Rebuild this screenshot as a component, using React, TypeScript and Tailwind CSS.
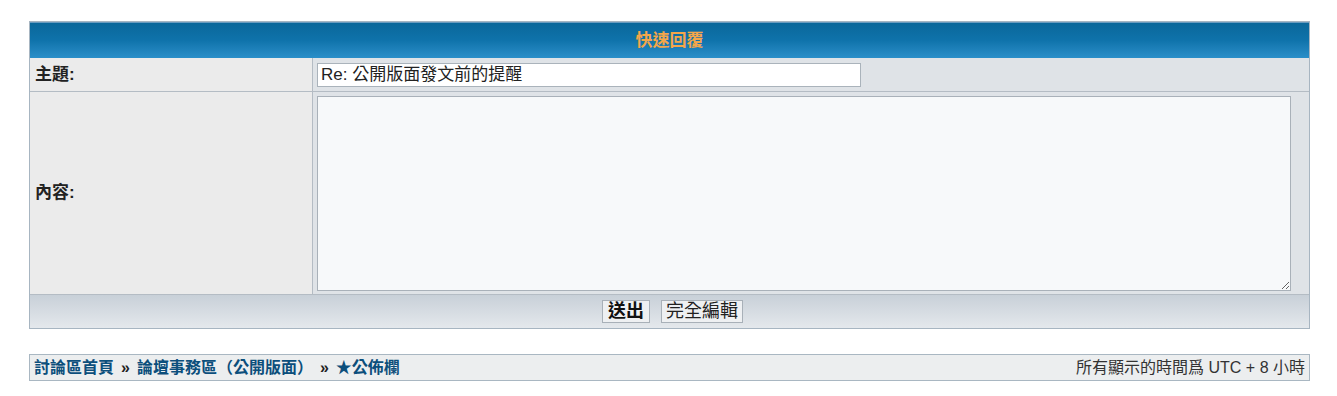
const cjk = { fontFamily: '"Liberation Sans", "Noto Sans CJK TC", sans-serif' };

const QuickReply = () => {
  return (
    <div className="border border-[#a7b5c1] bg-[#eceef0]">
      {/* 標題列 */}
      <div className="h-[36px] flex items-center justify-center border-t border-[#6a9cc0] bg-gradient-to-b from-[#0a679a] via-[#0f73ab] to-[#2a8fc9]">
        <span className="text-[17px] font-bold text-[#f4a64a]">快速回覆</span>
      </div>

      {/* 主題 */}
      <div className="flex h-[34px] border-b border-[#b4bcc4]">
        <div className="w-[283px] flex items-center pl-[5px] bg-[#ebebeb] border-r border-[#b4bcc4]">
          <span className="text-[17px] font-bold text-[#222]">主題:</span>
        </div>
        <div className="flex-1 flex items-center pl-[4px] bg-[#dfe3e7]">
          <input
            defaultValue="Re: 公開版面發文前的提醒"
            className="w-[544px] h-[24px] bg-white border border-[#aab3bb] px-[3px] text-[17px] text-[#222] outline-none"
            style={cjk}
          />
        </div>
      </div>

      {/* 內容 */}
      <div className="flex h-[203px] border-b border-[#b4bcc4]">
        <div className="w-[283px] flex items-center pl-[5px] bg-[#ebebeb] border-r border-[#b4bcc4]">
          <span className="text-[17px] font-bold text-[#222]">內容:</span>
        </div>
        <div className="flex-1 flex items-center pl-[4px] pr-[18px] bg-[#dfe3e7]">
          <textarea className="w-full h-[195px] bg-[#f7f9fa] border border-[#a9b1b9] outline-none" />
        </div>
      </div>

      {/* 按鈕 */}
      <div className="h-[33px] flex items-center justify-center gap-[11px] pl-[6px] bg-gradient-to-b from-[#c8d0d8] to-[#e4e8ec]">
        <button className="h-[23px] w-[48px] flex items-center justify-center bg-[#eef0f2] border border-[#a8b0b8] text-[18px] font-bold text-[#111]">
          送出
        </button>
        <button className="h-[23px] w-[82px] flex items-center justify-center bg-[#eef0f2] border border-[#a8b0b8] text-[18px] text-[#222]">
          完全編輯
        </button>
      </div>
    </div>
  );
};

const Breadcrumbs = () => {
  return (
    <div className="mt-[25px] h-[27px] flex items-center justify-between px-[4px] bg-[#eceeef] border border-[#a9b7c2]">
      <div className="flex items-center gap-[7px] text-[16px] font-bold text-[#0c4f7c]">
        <span>討論區首頁</span>
        <span className="text-[#222]">»</span>
        <span>論壇事務區（公開版面）</span>
        <span className="text-[#222]">»</span>
        <span>★公佈欄</span>
      </div>
      <span className="text-[16px] text-[#333]">所有顯示的時間爲 UTC + 8 小時</span>
    </div>
  );
};

export default function App() {
  return (
    <div className="w-[1337px] h-[396px] bg-white pl-[29px] pr-[27px] pt-[21px]" style={cjk}>
      <QuickReply />
      <Breadcrumbs />
    </div>
  );
}
